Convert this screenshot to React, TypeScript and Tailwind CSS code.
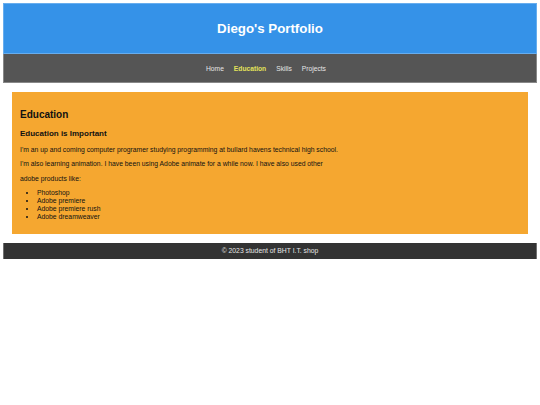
const navLinks = [
  { label: 'Home', active: false },
  { label: 'Education', active: true },
  { label: 'Skills', active: false },
  { label: 'Projects', active: false },
];

const products = ['Photoshop', 'Adobe premiere', 'Adobe premiere rush', 'Adobe dreamweaver'];

export default function App() {
  return (
    <div className="min-h-[405px] bg-white p-[3px] font-['Liberation_Sans',Arial,sans-serif] text-[6.8px] text-[#111]">
      <header className="flex h-[51px] items-center justify-center border border-white/25 bg-[#3592e8]">
        <h1 className="text-[13.3px] font-bold leading-none text-white">Diego's Portfolio</h1>
      </header>

      <nav className="flex h-[29px] items-center justify-center gap-[10px] border-x border-b border-white/30 bg-[#555555] pt-[2px] pr-[8px] text-[6.7px]">
        {navLinks.map((link) => (
          <a
            key={link.label}
            href="#"
            className={link.active ? 'font-bold text-[#e3e35a]' : 'text-[#e6e6e6]'}
          >
            {link.label}
          </a>
        ))}
      </nav>

      <main className="mx-[9px] mt-[9px] bg-[#f5a730] p-[8px]">
        <h2 className="mt-[9px] text-[10px] font-bold leading-[12px]">Education</h2>
        <h3 className="mt-[8px] text-[8px] font-bold leading-[10px]">Education is Important</h3>
        <p className="mt-[7px] leading-[8px]">
          I'm an up and coming computer programer studying programming at bullard havens technical high school.
        </p>
        <p className="mt-[6px] leading-[8px]">
          I'm also learning animation. I have been using Adobe animate for a while now. I have also used other
        </p>
        <p className="mt-[7px] leading-[8px]">adobe products like:</p>
        <ul className="mt-[6px] mb-[5px] list-disc pl-[17px] leading-[8px]">
          {products.map((p) => (
            <li key={p}>{p}</li>
          ))}
        </ul>
      </main>

      <footer className="mt-[9px] flex h-[16px] items-center justify-center border-x border-white/30 bg-[#333333] text-[#e6e6e6]">
        © 2023 student of BHT I.T. shop
      </footer>
    </div>
  );
}
